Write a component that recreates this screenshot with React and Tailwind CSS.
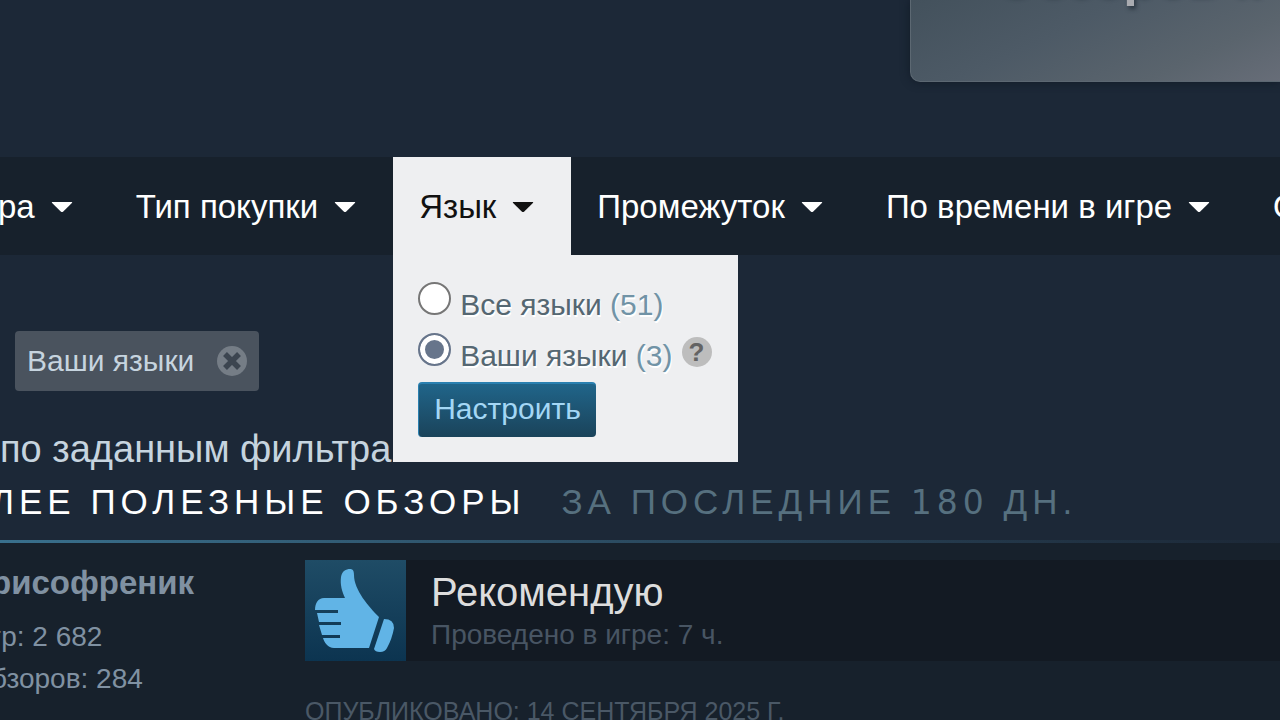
import React, { useState } from "react";

function Caret() {
  return (
    <svg viewBox="0 0 22 12" className="h-3 w-[22px] shrink-0 fill-current" aria-hidden="true">
      <path d="M1.2 1H20.8Q21.6 1.2 20.9 2L12 10.7Q11 11.5 10 10.7L1.1 2Q0.4 1.2 1.2 1Z" />
    </svg>
  );
}

function FilterItem({ label, open, children, first }) {
  return (
    <li className="relative shrink-0">
      <button
        type="button"
        aria-expanded={open}
        className={
          "flex h-[98px] items-center gap-4 whitespace-nowrap pr-[37px] pt-0.5 text-[33px] leading-10 " +
          (first ? "pl-0 " : "pl-[26px] ") +
          (open ? "bg-[#eeeff1] text-[#111111]" : "text-white")
        }
      >
        {label}
        <Caret />
      </button>
      {children}
    </li>
  );
}

function LanguageOption({ id, label, count, checked, onChange, children }) {
  return (
    <div className="flex h-[51px] items-center">
      <input
        id={id}
        type="radio"
        name="language"
        checked={checked}
        onChange={onChange}
        className="mb-1 size-[33px] shrink-0 appearance-none rounded-full border-2 border-[#767676] bg-white checked:border-[#67758b] checked:bg-[#67758b] checked:shadow-[inset_0_0_0_5px_#ffffff]"
      />
      <label htmlFor={id} className="ml-[9px] mt-2 whitespace-nowrap text-[30px] leading-9 text-[#556772] [text-shadow:1px_2px_0_#ffffff]">
        {label} <span className="text-[#7193a6]">({count})</span>
      </label>
      {children}
    </div>
  );
}

function ThumbUp() {
  return (
    <svg viewBox="0 0 101 101" className="size-full" aria-hidden="true">
      <path
        fill="#61b4e6"
        d="M40 38C37 31 35 25 36 17C37 11 41 9 45 9C48 9 49 11 49 15C49 30 64 47 74 57L64 88H29C23 88 19 82 18 78H35V75H17L14 65H36V62H14L12 53H33V50H10C10 43 13 38 19 38Z"
      />
      <path fill="#61b4e6" d="M79 59Q89 59 89 68Q87 79 82 88Q80 92 75 92Q70 92 69 89Z" />
    </svg>
  );
}

export default function App() {
  const [language, setLanguage] = useState("mine");
  return (
    <div className="flex h-screen flex-col overflow-hidden bg-[#1c2837] font-['Liberation_Sans',Arial,sans-serif]">
      <header className="flex h-[157px] shrink-0 items-start justify-end">
        <div className="h-[82px] w-[370px] overflow-hidden rounded-bl-[10px] border-b border-l border-[#5c6872] bg-[linear-gradient(155deg,#43515c_0%,#4d5a66_40%,#5a646d_75%,#676d78_100%)] shadow-[0_0_10px_#111b27]">
          <p className="-mt-[53px] ml-[84px] whitespace-nowrap text-[52px] font-bold leading-[60px] text-[#a9abb0] [text-shadow:2px_3px_4px_#2a3640]">
            Обзоров к
          </p>
        </div>
      </header>

      <nav className="relative z-10 shrink-0 bg-[#17212c]">
        <ul className="-ml-0.5 flex">
          <FilterItem label="ра" first />
          <FilterItem label="Тип покупки" />
          <FilterItem label="Язык" open>
            <div className="absolute left-0 top-full flex h-[207px] w-[345px] flex-col items-start bg-[#eeeff1] pl-[25px] pt-5">
              <LanguageOption
                id="lang-all"
                label="Все языки"
                count={51}
                checked={language === "all"}
                onChange={() => setLanguage("all")}
              />
              <LanguageOption
                id="lang-mine"
                label="Ваши языки"
                count={3}
                checked={language === "mine"}
                onChange={() => setLanguage("mine")}
              >
                <span className="ml-[9px] flex size-[30px] items-center justify-center rounded-full bg-[#bdbdbd] text-[26px] font-bold leading-none text-[#636363]">
                  ?
                </span>
              </LanguageOption>
              <button
                type="button"
                className="mt-[5px] h-[55px] rounded-[4px] border-l border-t-2 border-[#2a80b0] bg-linear-to-b from-[#20658a] to-[#1a435a] px-[15px] pb-1 text-[30px] leading-9 text-[#a4d7f5]"
              >
                Настроить
              </button>
            </div>
          </FilterItem>
          <FilterItem label="Промежуток" />
          <FilterItem label="По времени в игре" />
          <FilterItem label="О" />
        </ul>
      </nav>

      <section className="shrink-0">
        <div className="pl-[15px] pt-[76px]">
          <button type="button" className="flex h-[60px] items-center gap-[23px] rounded-[4px] bg-[#4a535e] px-3 text-[30px] leading-9 text-[#c6d4df]">
            Ваши языки
            <svg viewBox="0 0 30 30" className="size-[30px]" aria-hidden="true">
              <circle cx="15" cy="15" r="15" fill="#757d86" />
              <path d="M8 8L22 22M22 8L8 22" stroke="#3c4550" strokeWidth="5.5" />
            </svg>
          </button>
        </div>
        <p className="mt-9 whitespace-nowrap text-[38px] leading-[44px] text-[#c6d4df]">по заданным фильтрам</p>
        <h2 className="mt-[11px] flex h-10 gap-9 whitespace-nowrap text-[35px] leading-10 tracking-[5px]">
          <span className="-ml-[9px] text-white">ЛЕЕ ПОЛЕЗНЫЕ ОБЗОРЫ</span>
          <span className="text-[#56707f]">
            ЗА ПОСЛЕДНИЕ <span className="font-['DejaVu_Sans'] text-[33px]">180</span> ДН.
          </span>
        </h2>
        <div className="mt-[18px] h-[3px] bg-linear-to-r from-[#39708d] to-[#1c2837]" />
      </section>

      <article className="flex grow bg-[#17212c] pt-[17px]">
        <aside className="-ml-[9px] w-[314px] shrink-0 whitespace-nowrap text-[#8091a2]">
          <h3 className="text-[33px] font-bold leading-[46px]">рисофреник</h3>
          <p className="mt-2.5 text-[28px] leading-[42px]">гр: 2 682</p>
          <p className="text-[28px] leading-[42px]">бзоров: 284</p>
        </aside>
        <div className="grow">
          <div className="flex h-[101px] bg-[#131a23]">
            <div className="size-[101px] shrink-0 bg-linear-to-b from-[#1f4c66] to-[#0c3450]">
              <ThumbUp />
            </div>
            <div className="pl-[25px] pt-[9px]">
              <h4 className="text-[40px] leading-[46px] text-[#dddddd]">Рекомендую</h4>
              <p className="text-[28px] leading-10 text-[#485563]">Проведено в игре: 7 ч.</p>
            </div>
          </div>
          <p className="mt-[34px] whitespace-nowrap text-[25px] leading-8 text-[#4a5866]">ОПУБЛИКОВАНО: 14 СЕНТЯБРЯ 2025 Г.</p>
        </div>
      </article>
    </div>
  );
}
